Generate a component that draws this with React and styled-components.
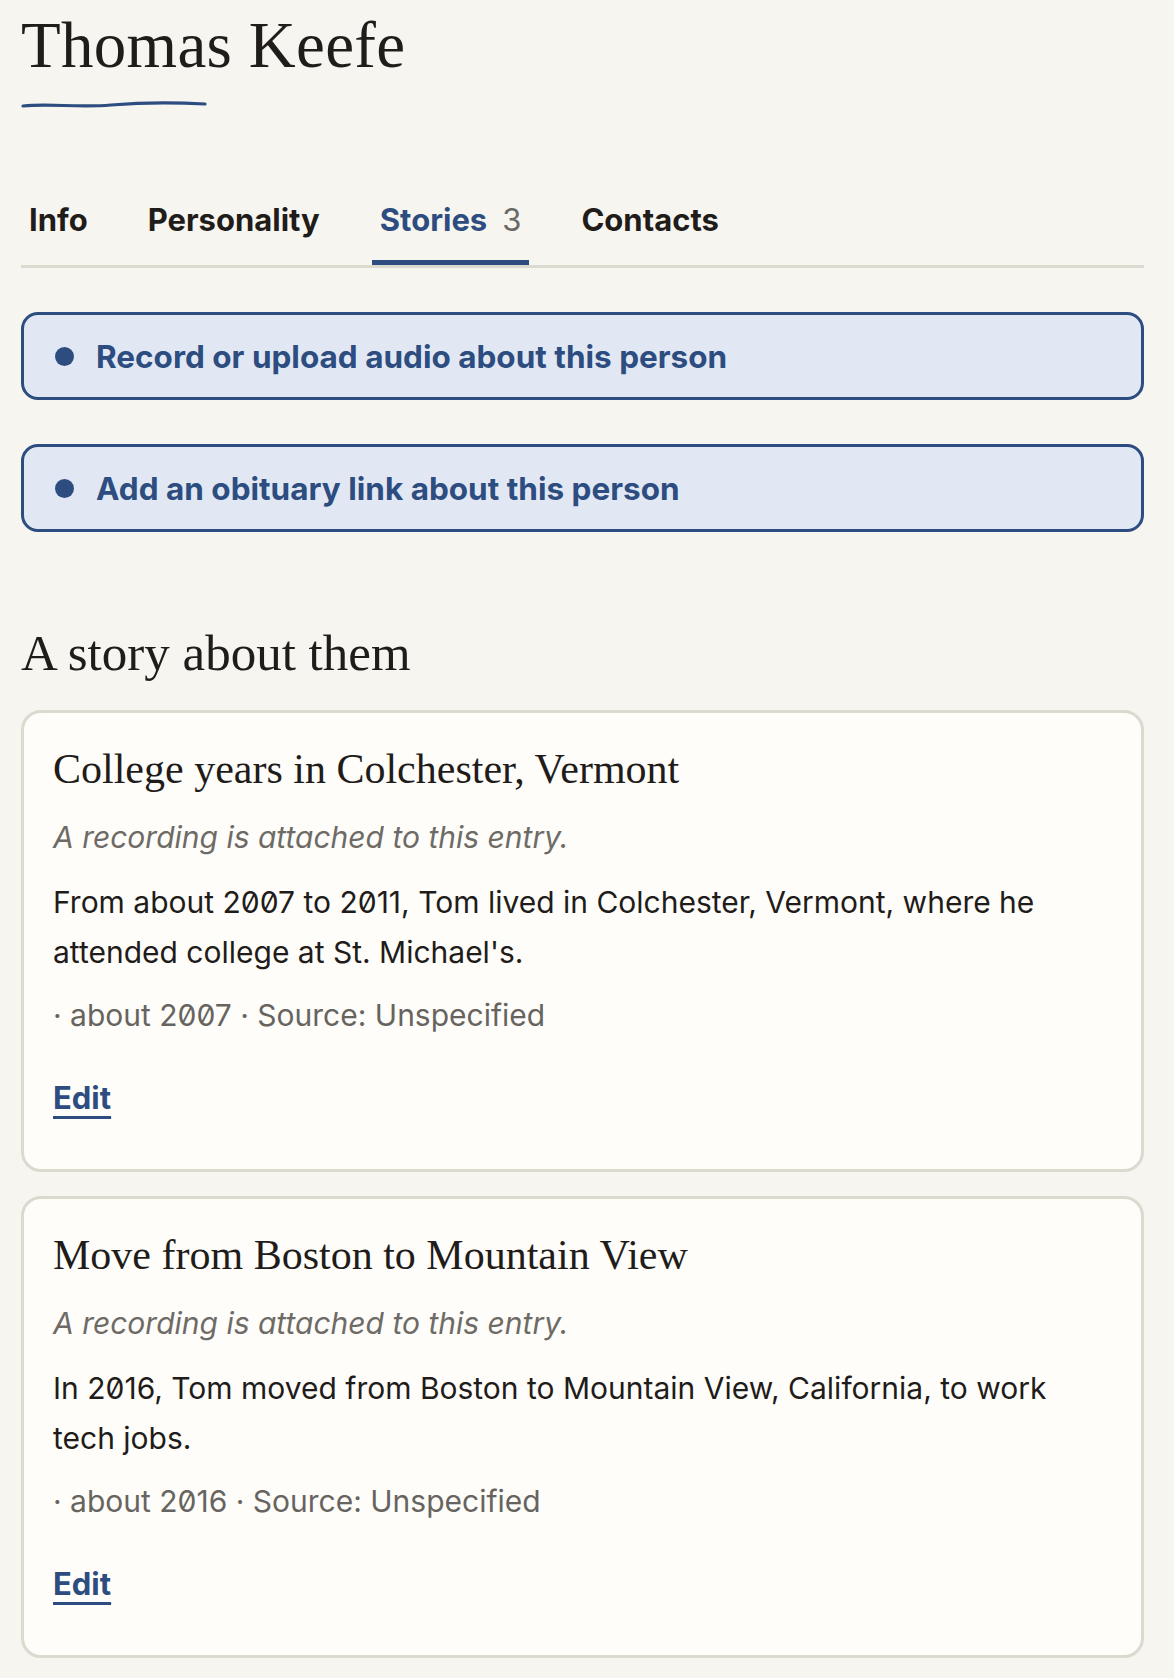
import styled, { createGlobalStyle } from "styled-components";

const GlobalStyle = createGlobalStyle`
  body {
    margin: 0;
    background: #f7f5f0;
    color: #1f1c1a;
    font-family: Inter, "Liberation Sans", sans-serif;
    font-feature-settings: "zero";
  }
`;

const stories = [
  {
    id: 1,
    title: "College years in Colchester, Vermont",
    body: "From about 2007 to 2011, Tom lived in Colchester, Vermont, where he attended college at St. Michael's.",
    meta: "· about 2007 · Source: Unspecified",
  },
  {
    id: 2,
    title: "Move from Boston to Mountain View",
    body: "In 2016, Tom moved from Boston to Mountain View, California, to work tech jobs.",
    meta: "· about 2016 · Source: Unspecified",
  },
];

const tabs = [
  { label: "Info" },
  { label: "Personality" },
  { label: "Stories", count: 3, active: true },
  { label: "Contacts" },
];

function App() {
  return (
    <Page>
      <GlobalStyle />
      <Name>Thomas Keefe</Name>
      <Squiggle width="186" height="10" viewBox="0 0 186 10">
        <path
          d="M2 7 C 30 4, 55 9, 90 6 S 150 3, 184 5"
          fill="none"
          stroke="#2d4d80"
          strokeWidth="3.2"
          strokeLinecap="round"
        />
      </Squiggle>

      <TabBar>
        {tabs.map((t) => (
          <Tab key={t.label} $active={t.active}>
            {t.label}
            {t.count && <Count>{t.count}</Count>}
          </Tab>
        ))}
      </TabBar>

      <Prompt>
        <Dot />
        Record or upload audio about this person
      </Prompt>
      <Prompt>
        <Dot />
        Add an obituary link about this person
      </Prompt>

      <SectionTitle>A story about them</SectionTitle>

      <Cards>
        {stories.map((s) => (
          <Card key={s.id}>
            <CardTitle>{s.title}</CardTitle>
            <Note>A recording is attached to this entry.</Note>
            <Body>{s.body}</Body>
            <Meta>{s.meta}</Meta>
            <EditLink href="#">Edit</EditLink>
          </Card>
        ))}
      </Cards>
    </Page>
  );
}

const Page = styled.div`
  padding: 6px 30px 21px 21px;
`;

const Name = styled.h1`
  margin: 0;
  font-family: "Liberation Serif", serif;
  font-weight: 400;
  font-size: 65px;
  line-height: 78px;
  letter-spacing: 0.3px;
`;

const Squiggle = styled.svg`
  display: block;
  margin-top: 15px;
`;

const TabBar = styled.div`
  display: flex;
  margin-top: 93px;
  border-bottom: 3px solid #dcd9cf;
`;

const Tab = styled.div`
  padding: 0 8px 22px;
  margin-right: 44px;
  font-size: 31px;
  line-height: 36px;
  font-weight: 700;
  color: ${(p) => (p.$active ? "#2d4d80" : "#1f1c1a")};
  border-bottom: 5px solid ${(p) => (p.$active ? "#2d4d80" : "transparent")};
`;

const Count = styled.span`
  margin-left: 15px;
  font-weight: 400;
  color: #6b6964;
`;

const Prompt = styled.div`
  display: flex;
  align-items: center;
  height: 88px;
  box-sizing: border-box;
  margin-top: 44px;
  padding-left: 31px;
  border: 3px solid #2d4d80;
  border-radius: 17px;
  background: #e1e8f4;
  color: #2d4d80;
  font-size: 31.5px;
  font-weight: 700;
`;

const Dot = styled.span`
  width: 19px;
  height: 19px;
  border-radius: 50%;
  background: #2d4d80;
  margin-right: 22px;
  flex-shrink: 0;
`;

const SectionTitle = styled.h2`
  margin: 93px 0 0;
  font-family: "Liberation Serif", serif;
  font-weight: 400;
  font-size: 51px;
  line-height: 56px;
`;

const Cards = styled.div`
  display: flex;
  flex-direction: column;
  gap: 24px;
  margin-top: 29px;
`;

const Card = styled.div`
  display: flex;
  flex-direction: column;
  align-items: flex-start;
  padding: 33px 29px 46px;
  border: 3px solid #dcd9cf;
  border-radius: 20px;
  background: #fefdfa;
`;

const CardTitle = styled.h3`
  margin: 0;
  font-family: "Liberation Serif", serif;
  font-weight: 400;
  font-size: 42px;
  line-height: 46px;
`;

const Note = styled.p`
  margin: 20px 0 0;
  font-style: italic;
  font-size: 30px;
  line-height: 50px;
  color: #6e6b66;
`;

const Body = styled.p`
  margin: 15px 0 0;
  font-size: 30px;
  line-height: 50px;
`;

const Meta = styled.p`
  margin: 13px 0 0;
  font-size: 30px;
  line-height: 50px;
  color: #67645f;
`;

const EditLink = styled.a`
  margin-top: 33px;
  font-size: 31px;
  line-height: 50px;
  font-weight: 700;
  color: #2d4d80;
  text-decoration: underline;
  text-decoration-thickness: 3px;
  text-underline-offset: 7px;
`;

export default App;
